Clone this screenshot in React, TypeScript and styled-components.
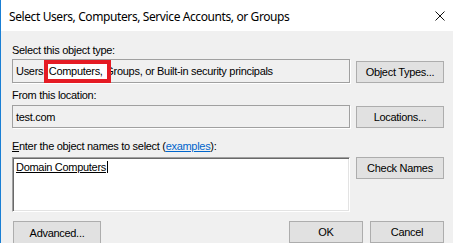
import * as React from "react";
import styled, { createGlobalStyle } from "styled-components";

const GlobalStyle = createGlobalStyle`
  html, body {
    margin: 0;
    padding: 0;
    overflow: hidden;
    background: #f0f0f0;
  }
`;

export default function App() {
  return (
    <>
      <GlobalStyle />
      <Window>
        <TitleBar>
          <Title>Select Users, Computers, Service Accounts, or Groups</Title>
          <CloseIcon width="10" height="10" viewBox="0 0 10 10">
            <path d="M0.5 0.5 L9.5 9.5 M9.5 0.5 L0.5 9.5" stroke="#111" strokeWidth="1" />
          </CloseIcon>
        </TitleBar>
        <Body>
          <Label $top={13}>Select this object type:</Label>
          <Row $top={2}>
            <Field $height={24}>
              Users, <Marked><MarkedText>Computers,</MarkedText></Marked> Groups, or Built-in security principals
            </Field>
            <Button>Object Types...</Button>
          </Row>

          <Label $top={6}>From this location:</Label>
          <Row $top={3}>
            <Field $height={23}>test.com</Field>
            <Button>Locations...</Button>
          </Row>

          <Label $top={12}>
            <u>E</u>nter the object names to select (<Link>examples</Link>):
          </Label>
          <Row $top={4} $align="start">
            <NamesBox>
              <Resolved>Domain Computers</Resolved>
              <Caret />
            </NamesBox>
            <Button>Check Names</Button>
          </Row>

          <Footer>
            <Button $width={88}>Advanced...</Button>
            <FooterRight>
              <Button $width={74}>OK</Button>
              <Button $width={74}>Cancel</Button>
            </FooterRight>
          </Footer>
        </Body>
      </Window>
    </>
  );
}

const Window = styled.div`
  width: 453px;
  height: 243px;
  box-sizing: border-box;
  border-left: 1px solid #1a7fd4;
  background: #f0f0f0;
  display: flex;
  flex-direction: column;
  overflow: hidden;
  font-family: "Liberation Sans", Arial, sans-serif;
  font-size: 11px;
  letter-spacing: -0.3px;
  color: #000;
`;

const TitleBar = styled.div`
  height: 31px;
  flex: none;
  background: #fff;
  display: flex;
  align-items: center;
  justify-content: space-between;
  padding: 0 7px 0 8px;
`;

const Title = styled.span`
  font-family: "Noto Sans", "Open Sans", sans-serif;
  font-size: 12px;
  letter-spacing: -0.4px;
  color: #000;
  padding-top: 1px;
`;

const CloseIcon = styled.svg`
  display: block;
  margin-right: 1px;
`;

const Body = styled.div`
  display: flex;
  flex-direction: column;
  padding: 0 9px 0 11px;
`;

const Label = styled.div<{ $top: number }>`
  margin-top: ${(p) => p.$top}px;
  line-height: 13px;
  height: 13px;
  white-space: nowrap;
`;

const Link = styled.span`
  color: #0066cc;
  text-decoration: underline;
`;

const Row = styled.div<{ $top: number; $align?: string }>`
  margin-top: ${(p) => p.$top}px;
  display: grid;
  grid-template-columns: 1fr 88px;
  column-gap: 6px;
  align-items: ${(p) => p.$align || "end"};
`;

const Field = styled.div<{ $height: number }>`
  position: relative;
  box-sizing: border-box;
  height: ${(p) => p.$height}px;
  border: 1px solid #a0a0a0;
  box-shadow: 1px 1px 0 #fff;
  background: #f0f0f0;
  padding-left: 3px;
  display: flex;
  align-items: center;
  white-space: pre;
`;

/* red annotation drawn over the screenshot */
const Marked = styled.span`
  position: relative;
  &::before,
  &::after {
    content: "";
    position: absolute;
    left: -5px;
    right: -8px;
    top: -5px;
    bottom: -6px;
    box-sizing: border-box;
  }
  &::before {
    background: #fff;
    z-index: 0;
  }
  &::after {
    border: 4px solid #e51b24;
    z-index: 2;
  }
`;

const MarkedText = styled.span`
  position: relative;
  z-index: 1;
`;

const NamesBox = styled.div`
  box-sizing: border-box;
  height: 55px;
  background: #fff;
  border: 1px solid;
  border-color: #a0a0a0 #fff #fff #a0a0a0;
  box-shadow: inset 1px 1px 0 #696969, inset -1px -1px 0 #e3e3e3;
  padding: 3px 0 0 3px;
  display: flex;
  align-items: flex-start;
  line-height: 13px;
`;

const Resolved = styled.span`
  text-decoration: underline;
  white-space: nowrap;
`;

const Caret = styled.span`
  display: inline-block;
  width: 1px;
  height: 12px;
  background: #000;
  margin-left: 1px;
`;

const Button = styled.div<{ $width?: number }>`
  box-sizing: border-box;
  height: 22px;
  width: ${(p) => (p.$width ? `${p.$width}px` : "auto")};
  background: #e1e1e1;
  border: 1px solid #adadad;
  display: flex;
  align-items: center;
  justify-content: center;
  white-space: nowrap;
`;

const Footer = styled.div`
  margin-top: 9px;
  display: flex;
  justify-content: space-between;
  padding-left: 1px;
  & > div {
    height: 23px;
  }
`;

const FooterRight = styled.div`
  display: flex;
  gap: 7px;
`;
